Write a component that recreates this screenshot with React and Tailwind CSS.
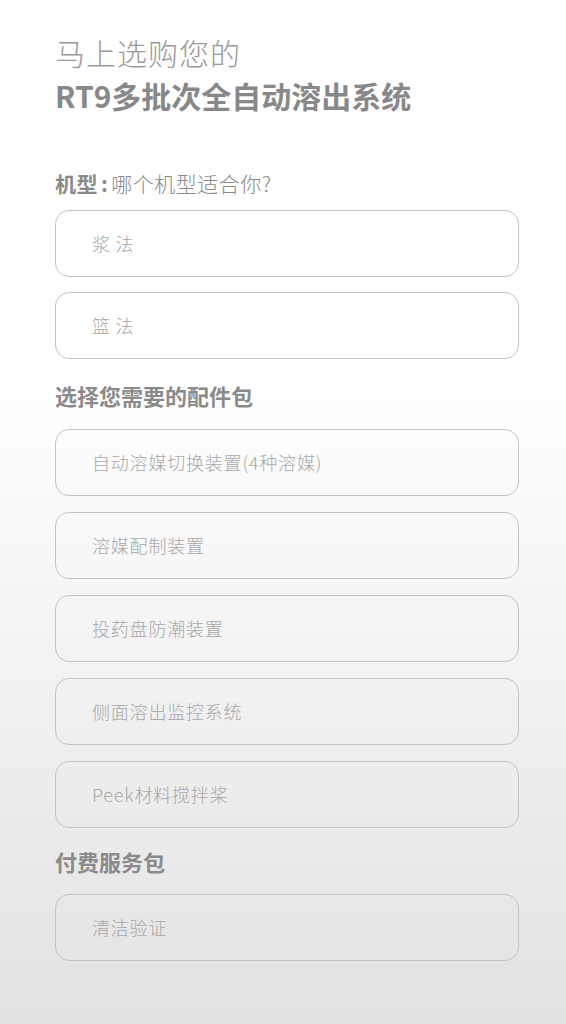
export default function App() {
  const Box = ({ children }) => (
    <div className="h-[67px] w-[464px] rounded-[14px] border border-[#c4c4c4] flex items-center pl-[36px] text-[18px] tracking-[0.8px] font-light text-[#a8a8a8]">
      {children}
    </div>
  );
  return (
    <div
      className="min-h-screen w-full bg-gradient-to-b from-white from-[38%] to-[#e2e2e2] pl-[55px] pt-[31px] pb-[60px]"
      style={{ fontFamily: '"Noto Sans CJK SC", "Noto Sans", sans-serif' }}
    >
      <div className="text-[30px] leading-[43px] tracking-[1px] font-light text-[#9a9a9a]">马上选购您的</div>
      <div className="text-[30px] leading-[43px] font-bold text-[#888888]">RT9多批次全自动溶出系统</div>

      <div className="mt-[51px] text-[21px] leading-[30px] tracking-[0.5px] text-[#8a8a8a]">
        <span className="font-bold">机型</span>
        <span className="font-bold mx-[3px]">:</span>
        <span className="font-light">哪个机型适合你?</span>
      </div>
      <div className="mt-[12px] flex flex-col gap-[15px]">
        <Box>浆 法</Box>
        <Box>篮 法</Box>
      </div>

      <div className="mt-[21px] text-[22px] leading-[30px] font-bold text-[#8a8a8a]">选择您需要的配件包</div>
      <div className="mt-[19px] flex flex-col gap-[16px]">
        <Box>自动溶媒切换装置(4种溶媒)</Box>
        <Box>溶媒配制装置</Box>
        <Box>投药盘防潮装置</Box>
        <Box>侧面溶出监控系统</Box>
        <Box>Peek材料搅拌桨</Box>
      </div>

      <div className="mt-[18px] text-[22px] leading-[30px] font-bold text-[#8a8a8a]">付费服务包</div>
      <div className="mt-[18px] flex flex-col">
        <Box>清洁验证</Box>
      </div>
    </div>
  );
}
